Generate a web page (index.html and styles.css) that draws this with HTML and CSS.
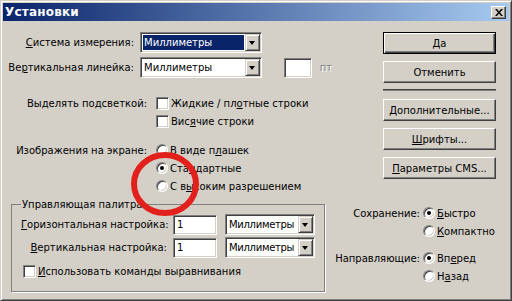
FILE: index.html
```html
<!DOCTYPE html>
<html lang="ru">
<head>
    <meta charset="UTF-8">
    <title>Установки</title>
    <link rel="stylesheet" href="styles.css">
</head>
<body>
    <div class="window">
        <div class="titlebar">
            <span class="title">Установки</span>
            <span class="close">
                <svg width="8" height="7" viewBox="0 0 8 7"><path d="M0 0h2l2 2.5 2-2.5h2L5 3.5 8 7H6L4 4.5 2 7H0l3-3.5z" fill="#000"/></svg>
            </span>
        </div>

        <div class="client">
            <div class="left">
                <div class="row row-select">
                    <span class="lbl lbl-a"><u>С</u>истема измерения:</span>
                    <div class="select sel-wide">
                        <span class="value selected">Миллиметры</span>
                        <span class="drop"></span>
                    </div>
                </div>
                <div class="row row-select second">
                    <span class="lbl lbl-a">Ве<u>р</u>тикальная линейка:</span>
                    <div class="select sel-wide">
                        <span class="value">Миллиметры</span>
                        <span class="drop"></span>
                    </div>
                    <span class="field field-small"></span>
                    <span class="unit">пт</span>
                </div>

                <div class="row row-check first-check">
                    <span class="lbl lbl-b">Выделять подсветкой:</span>
                    <span class="check"></span>
                    <span>Жидкие / пл<u>о</u>тные строки</span>
                </div>
                <div class="row row-check">
                    <span class="lbl lbl-b"></span>
                    <span class="check"></span>
                    <span>Вис<u>я</u>чие строки</span>
                </div>

                <div class="row row-check first-radio">
                    <span class="lbl lbl-b">Изображения на экране:</span>
                    <span class="radio"></span>
                    <span>В виде п<u>л</u>ашек</span>
                </div>
                <div class="row row-check">
                    <span class="lbl lbl-b"></span>
                    <span class="radio on"></span>
                    <span>Ста<u>н</u>дартные</span>
                </div>
                <div class="row row-check">
                    <span class="lbl lbl-b"></span>
                    <span class="radio"></span>
                    <span>С в<u>ы</u>соким разрешением</span>
                </div>

                <fieldset class="group">
                    <legend>Управляющая палитра</legend>
                    <div class="row row-field">
                        <span class="lbl lbl-c"><u>Г</u>оризонтальная настройка:</span>
                        <span class="field field-num">1</span>
                        <div class="select sel-unit">
                            <span class="value">Миллиметры</span>
                            <span class="drop"></span>
                        </div>
                    </div>
                    <div class="row row-field">
                        <span class="lbl lbl-c"><u>В</u>ертикальная настройка:</span>
                        <span class="field field-num">1</span>
                        <div class="select sel-unit">
                            <span class="value">Миллиметры</span>
                            <span class="drop"></span>
                        </div>
                    </div>
                    <div class="row row-check group-check">
                        <span class="check"></span>
                        <span><u>И</u>спользовать команды выравнивания</span>
                    </div>
                </fieldset>
            </div>

            <div class="right">
                <div class="buttons">
                    <span class="btn default">Да</span>
                    <span class="btn">Отменить</span>
                    <span class="sep"></span>
                    <span class="btn"><u>Д</u>ополнительные...</span>
                    <span class="btn"><u>Ш</u>рифты...</span>
                    <span class="btn"><u>П</u>араметры CMS...</span>
                </div>

                <div class="options">
                    <div class="row row-check">
                        <span class="lbl lbl-d">Сохранение:</span>
                        <span class="radio on"></span>
                        <span><u>Б</u>ыстро</span>
                    </div>
                    <div class="row row-check">
                        <span class="lbl lbl-d"></span>
                        <span class="radio"></span>
                        <span><u>К</u>омпактно</span>
                    </div>
                    <div class="row row-check gap-top">
                        <span class="lbl lbl-d">Направляющие:</span>
                        <span class="radio on"></span>
                        <span>Вп<u>е</u>ред</span>
                    </div>
                    <div class="row row-check">
                        <span class="lbl lbl-d"></span>
                        <span class="radio"></span>
                        <span>Н<u>а</u>зад</span>
                    </div>
                </div>
            </div>
        </div>

        <!-- красный круг поверх диалога -->
        <svg class="mark" width="80" height="76" viewBox="0 0 80 76">
            <ellipse cx="40" cy="38" rx="31" ry="29" fill="none" stroke="#e3211c" stroke-width="6"/>
        </svg>
    </div>
</body>
</html>
```

FILE: styles.css
```css
* {
    box-sizing: border-box;
}
body {
    margin: 0;
    font-family: 'DejaVu Sans', sans-serif;
    font-size: 10px;
    color: #000;
    background-color: #d4d0c8;
}
u {
    text-decoration: underline;
    text-underline-offset: 1px;
}
.window {
    position: relative;
    width: 512px;
    height: 301px;
    padding: 1px;
    background-color: #d4d0c8;
    border: 1px solid;
    border-color: #d4d0c8 #404040 #404040 #d4d0c8;
    box-shadow: inset 1px 1px 0 #fff, inset -1px -1px 0 #808080;
}
.titlebar {
    display: flex;
    align-items: center;
    justify-content: space-between;
    height: 18px;
    margin: 1px 1px 0 1px;
    padding: 0 3px 0 2px;
    background: linear-gradient(to right, #0a246a, #a6caf0);
}
.title {
    color: #fff;
    font-weight: bold;
    font-size: 12px;
    letter-spacing: 0.2px;
}
.close {
    display: flex;
    align-items: center;
    justify-content: center;
    width: 15px;
    height: 13px;
    background-color: #d4d0c8;
    border: 1px solid;
    border-color: #fff #404040 #404040 #fff;
    box-shadow: inset -1px -1px 0 #808080;
}
.client {
    display: flex;
    padding-top: 11px;
}
.left {
    width: 330px;
}
.row {
    display: flex;
    align-items: center;
    white-space: nowrap;
}
.lbl {
    flex: none;
    text-align: right;
}
.lbl-a {
    width: 132px;
    margin-right: 6px;
}
.lbl-b {
    width: 145px;
    margin-right: 9px;
}
.lbl-c {
    width: 146px;
    margin-right: 6px;
}
.lbl-d {
    width: 88px;
    margin-right: 3px;
}
.row-select {
    height: 21px;
}
.row-select.second {
    margin-top: 4px;
}
.row-check {
    height: 18px;
}
.first-check {
    margin-top: 16px;
}
.first-radio {
    margin-top: 11px;
}

/* поля и списки */
.select {
    display: flex;
    height: 21px;
    padding: 1px;
    background-color: #fff;
    border: 1px solid;
    border-color: #808080 #fff #fff #808080;
    box-shadow: inset 1px 1px 0 #404040, inset -1px -1px 0 #d4d0c8;
}
.select .value {
    flex: 1;
    display: flex;
    align-items: center;
    overflow: hidden;
    margin: 1px 1px 1px 1px;
    padding-left: 1px;
}
.select .value.selected {
    background-color: #0a246a;
    color: #fff;
}
.drop {
    position: relative;
    flex: none;
    width: 15px;
    background-color: #d4d0c8;
    border: 1px solid;
    border-color: #d4d0c8 #404040 #404040 #d4d0c8;
    box-shadow: inset 1px 1px 0 #fff, inset -1px -1px 0 #808080;
}
.drop::after {
    content: '';
    position: absolute;
    left: 3px;
    top: 6px;
    border-left: 3.5px solid transparent;
    border-right: 3.5px solid transparent;
    border-top: 4px solid #000;
}
.sel-wide {
    width: 122px;
}
.sel-unit {
    width: 90px;
    margin-left: 8px;
}
.sel-unit .value {
    letter-spacing: -0.3px;
}
.field {
    display: flex;
    align-items: center;
    height: 20px;
    padding-left: 3px;
    background-color: #fff;
    border: 1px solid;
    border-color: #808080 #fff #fff #808080;
    box-shadow: inset 1px 1px 0 #404040, inset -1px -1px 0 #d4d0c8;
}
.field-small {
    width: 28px;
    margin-left: 22px;
}
.field-num {
    width: 44px;
}
.unit {
    margin-left: 8px;
    color: #808080;
    text-shadow: 1px 1px 0 #fff;
}

/* флажки и переключатели */
.check {
    flex: none;
    width: 13px;
    height: 13px;
    margin-right: 2px;
    background-color: #fff;
    border: 1px solid;
    border-color: #808080 #fff #fff #808080;
    box-shadow: inset 1px 1px 0 #404040, inset -1px -1px 0 #d4d0c8;
}
.radio {
    position: relative;
    flex: none;
    width: 12px;
    height: 12px;
    margin-right: 2px;
    border-radius: 50%;
    background-color: #fff;
    border: 1px solid;
    border-color: #808080 #fff #fff #808080;
    box-shadow: inset 1px 1px 0 #404040, inset -1px -1px 0 #d4d0c8;
}
.radio.on::after {
    content: '';
    position: absolute;
    left: 3px;
    top: 3px;
    width: 4px;
    height: 4px;
    border-radius: 50%;
    background-color: #000;
}

/* группа */
.group {
    width: 314px;
    height: 93px;
    margin: 4px 0 0 9px;
    padding: 4px 8px 0 9px;
    border: 1px solid #808080;
    box-shadow: 1px 1px 0 #fff;
}
.group legend {
    padding: 0 1px;
    margin-left: 0;
}
.row-field {
    height: 21px;
    margin-bottom: 2px;
}
.group-check {
    margin-top: 4px;
    margin-left: 2px;
}

/* кнопки справа */
.right {
    flex: 1;
}
.buttons {
    display: flex;
    flex-direction: column;
    gap: 7px;
    width: 113px;
    margin-left: 51px;
}
.btn {
    display: flex;
    align-items: center;
    justify-content: center;
    height: 22px;
    background-color: #d4d0c8;
    border: 1px solid;
    border-color: #fff #404040 #404040 #fff;
    box-shadow: inset -1px -1px 0 #808080;
}
.btn.default {
    border: 1px solid #000;
    box-shadow: inset 1px 1px 0 #fff, inset -1px -1px 0 #404040, inset -2px -2px 0 #808080;
}
.sep {
    height: 2px;
    margin: -1px 0 1px 0;
    background-color: #404040;
    border-bottom: 1px solid #808080;
}
.options {
    margin-top: 25px;
}
.gap-top {
    margin-top: 9px;
}

.mark {
    position: absolute;
    left: 124px;
    top: 145px;
}
```
